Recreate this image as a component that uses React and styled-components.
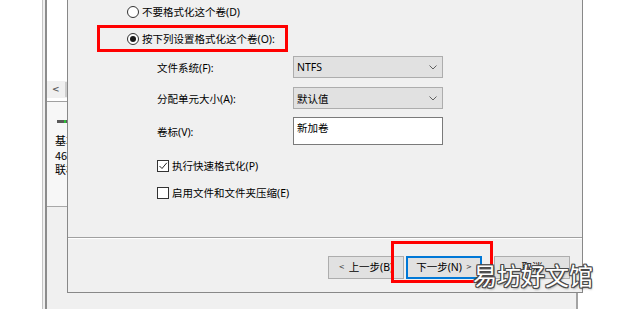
import React from "react";
import styled, { createGlobalStyle } from "styled-components";

const GlobalStyle = createGlobalStyle`
  html, body { margin: 0; padding: 0; background: #ffffff; overflow: hidden; }
  * { box-sizing: border-box; }
`;

const UI_FONT = `"Noto Sans", "Noto Sans CJK SC", sans-serif`;
const CJK_FONT = `"Noto Sans CJK SC", "Noto Sans", sans-serif`;

const Desktop = styled.div`
  position: relative;
  width: 620px;
  height: 309px;
  overflow: hidden;
  background: #ffffff;
  font-family: ${UI_FONT};
  color: #000;
`;

/* ---------- parent (Disk Management) window ---------- */
const ParentWindow = styled.div`
  position: absolute;
  left: 42px;
  top: -20px;
  width: 536px;
  height: 340px;
  display: flex;
  padding-left: 2px;
  background: #f0f0f0;
  border-left: 1px solid #c4c4c4;
  border-right: 2px solid #a3a3a3;
`;

const Frame = styled.div`
  flex: 1;
  display: flex;
  flex-direction: column;
  border-left: 2px solid #8c8c8c;
`;

const ListArea = styled.div`
  height: 101px;
  background: #ffffff;
`;

const HScrollBar = styled.div`
  height: 17px;
  display: flex;
  align-items: center;
  background: #f0f0f0;
  padding-left: 5px;
  gap: 5px;
`;

const ScrollArrow = styled.span`
  font-family: "DejaVu Sans", sans-serif;
  font-size: 9px;
  font-weight: bold;
  color: #606060;
  line-height: 1;
`;

const ScrollThumb = styled.div`
  width: 80px;
  height: 15px;
  background: #cdcdcd;
`;

const ScrollGap = styled.div`
  height: 4px;
  background: #ffffff;
  border-bottom: 1px solid #a0a0a0;
`;

const DiskPane = styled.div`
  height: 105px;
  background: #f7f7f7;
  border-bottom: 1px solid #a8a8a8;
  padding: 18px 0 0 8px;
  display: flex;
  flex-direction: column;
`;

const DriveIcon = styled.div`
  width: 10px;
  height: 3px;
  margin-left: 2px;
  background: linear-gradient(to right, #5a5a5a 0 7px, #2fbf3a 7px 9px, #5a5a5a 9px);
  margin-bottom: 10px;
`;

const DiskText = styled.div`
  font-family: ${CJK_FONT};
  font-size: 11px;
  line-height: 14.5px;
  white-space: nowrap;
`;

const FrameRest = styled.div`
  flex: 1;
  background: #f0f0f0;
`;

/* ---------- wizard dialog ---------- */
const Dialog = styled.div`
  position: absolute;
  left: 67px;
  top: -10px;
  width: 516px;
  height: 303px;
  display: flex;
  flex-direction: column;
  background: #f0f0f0;
  border: 1px solid #888888;
  font-size: 10.5px;
`;

const Body = styled.div`
  flex: 1;
  display: flex;
  flex-direction: column;
  padding-top: 13px;
`;

const RadioGroup = styled.div`
  display: flex;
  flex-direction: column;
  gap: 11px;
  padding-left: 59px;
`;

const OptionRow = styled.label`
  position: relative;
  display: flex;
  align-items: center;
  gap: 3px;
  height: 16px;
  line-height: 16px;
  white-space: nowrap;
`;

const RadioDot = styled.span`
  width: 12px;
  height: 12px;
  border-radius: 50%;
  border: 1px solid #333333;
  background: #ffffff;
  display: flex;
  align-items: center;
  justify-content: center;
  &::after {
    content: "";
    width: 6px;
    height: 6px;
    border-radius: 50%;
    background: ${(p) => (p.$checked ? "#1a1a1a" : "transparent")};
  }
`;

const CheckBox = styled.span`
  width: 12px;
  height: 12px;
  border: 1px solid #333333;
  background: #ffffff;
  display: flex;
  align-items: center;
  justify-content: center;
`;

const Highlight = styled.span`
  position: absolute;
  left: ${(p) => p.$left}px;
  top: ${(p) => p.$top}px;
  width: ${(p) => p.$w}px;
  height: ${(p) => p.$h}px;
  border: 3px solid #ff0000;
  pointer-events: none;
  z-index: 5;
`;

const FormGrid = styled.div`
  display: grid;
  grid-template-columns: 136px 150px;
  grid-template-rows: 22px 22px 27px;
  row-gap: 9px;
  margin: 9px 0 0 89px;
  & > :nth-child(n + 5) {
    margin-top: -1px;
  }
`;

const FieldLabel = styled.span`
  display: flex;
  align-items: center;
  white-space: nowrap;
`;

const Combo = styled.div`
  display: flex;
  align-items: center;
  justify-content: space-between;
  padding: 0 5px 0 3px;
  background: #e1e1e1;
  border: 1px solid #adadad;
`;

const TextField = styled.div`
  background: #ffffff;
  border: 1px solid #7a7a7a;
  padding: 3px 0 0 3px;
  line-height: 14px;
`;

const CheckList = styled.div`
  display: flex;
  flex-direction: column;
  gap: 11px;
  margin: 13px 0 0 89px;
`;

const Footer = styled.div`
  height: 55px;
  display: flex;
  justify-content: flex-end;
  align-items: flex-start;
  padding: 18px 12px 0 0;
  border-top: 1px solid #a0a0a0;
  box-shadow: inset 0 1px 0 #ffffff;
`;

const ButtonSlot = styled.div`
  position: relative;
  margin-left: ${(p) => p.$gap}px;
`;

const Button = styled.div`
  width: 76px;
  height: 23px;
  display: flex;
  align-items: center;
  justify-content: center;
  gap: 4px;
  background: #e1e1e1;
  border: ${(p) => (p.$default ? "2px solid #0078d7" : "1px solid #adadad")};
  white-space: nowrap;
  line-height: 1;
`;

const Chev = styled.span`
  font-family: "DejaVu Sans", sans-serif;
  font-size: 7px;
  color: #333;
`;

const Watermark = styled.div`
  position: absolute;
  left: 473px;
  top: 263px;
  font-family: ${CJK_FONT};
  font-size: 24px;
  line-height: 24px;
  color: #ffffff;
  white-space: nowrap;
  z-index: 10;
  text-shadow:
    1px 0 0 #4a4a4a, -1px 0 0 #4a4a4a, 0 1px 0 #4a4a4a, 0 -1px 0 #4a4a4a,
    1px 1px 0 #4a4a4a, -1px -1px 0 #4a4a4a, 1px -1px 0 #4a4a4a, -1px 1px 0 #4a4a4a,
    1px 2px 2px rgba(0, 0, 0, 0.35);
`;

const ChevronDown = () => (
  <svg width="8" height="5" viewBox="0 0 8 5">
    <polyline points="0.5,0.5 4,4 7.5,0.5" fill="none" stroke="#606060" strokeWidth="1" />
  </svg>
);

const CheckMark = () => (
  <svg width="10" height="10" viewBox="0 0 10 10">
    <polyline points="1.5,5 4,7.5 8.8,1.8" fill="none" stroke="#222" strokeWidth="1" />
  </svg>
);

export default function App() {
  return (
    <Desktop>
      <GlobalStyle />
      <ParentWindow>
        <Frame>
          <ListArea />
          <HScrollBar>
            <ScrollArrow>&lt;</ScrollArrow>
            <ScrollThumb />
          </HScrollBar>
          <ScrollGap />
          <DiskPane>
            <DriveIcon />
            <DiskText>基本</DiskText>
            <DiskText>465.76 GB</DiskText>
            <DiskText>联机</DiskText>
          </DiskPane>
          <FrameRest />
        </Frame>
      </ParentWindow>

      <Dialog>
        <Body>
          <RadioGroup>
            <OptionRow>
              <RadioDot />
              不要格式化这个卷(D)
            </OptionRow>
            <OptionRow>
              <RadioDot $checked />
              按下列设置格式化这个卷(O):
              <Highlight $left={-30} $top={-6} $w={191} $h={27} />
            </OptionRow>
          </RadioGroup>

          <FormGrid>
            <FieldLabel>文件系统(F):</FieldLabel>
            <Combo>
              <span>NTFS</span>
              <ChevronDown />
            </Combo>
            <FieldLabel>分配单元大小(A):</FieldLabel>
            <Combo>
              <span>默认值</span>
              <ChevronDown />
            </Combo>
            <FieldLabel>卷标(V):</FieldLabel>
            <TextField>新加卷</TextField>
          </FormGrid>

          <CheckList>
            <OptionRow>
              <CheckBox>
                <CheckMark />
              </CheckBox>
              执行快速格式化(P)
            </OptionRow>
            <OptionRow>
              <CheckBox />
              启用文件和文件夹压缩(E)
            </OptionRow>
          </CheckList>
        </Body>

        <Footer>
          <ButtonSlot $gap={0}>
            <Button>
              <Chev>&lt;</Chev>
              <span>上一步(B)</span>
            </Button>
          </ButtonSlot>
          <ButtonSlot $gap={2}>
            <Button $default>
              <span>下一步(N)</span>
              <Chev>&gt;</Chev>
            </Button>
            <Highlight $left={-15} $top={-15} $w={102} $h={42} />
          </ButtonSlot>
          <ButtonSlot $gap={12}>
            <Button>取消</Button>
          </ButtonSlot>
        </Footer>
      </Dialog>

      <Watermark>易坊好文馆</Watermark>
    </Desktop>
  );
}
